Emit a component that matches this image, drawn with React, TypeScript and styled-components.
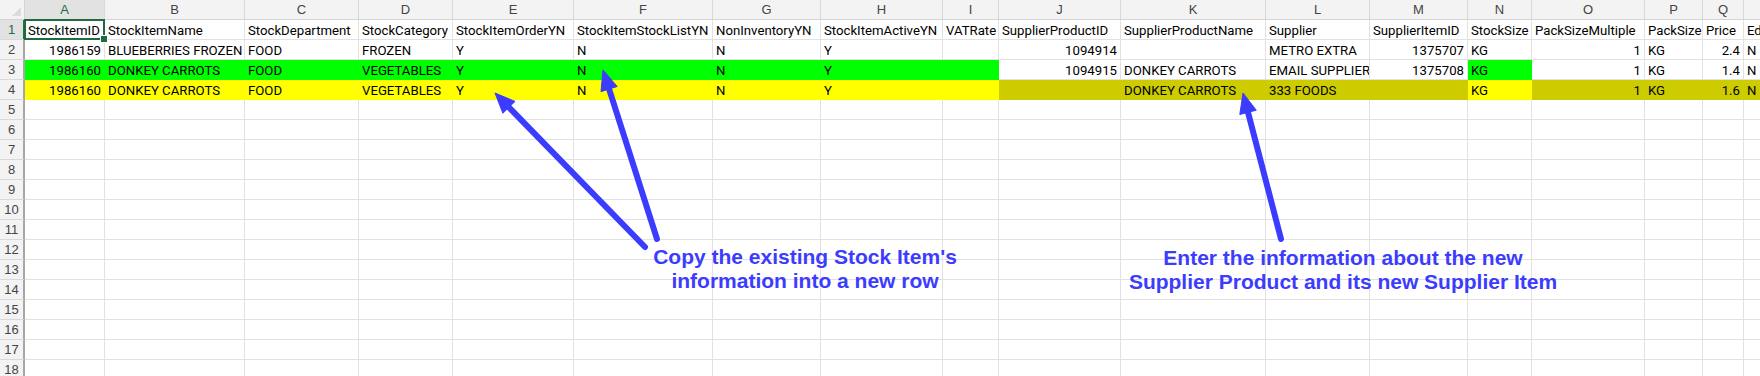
import React from 'react';
import styled, { createGlobalStyle, css } from 'styled-components';

const GlobalStyle = createGlobalStyle`
  html, body {
    margin: 0;
    padding: 0;
    background: #ffffff;
    overflow: hidden;
  }
`;

type Fill = 'green' | 'yellow' | 'olive' | undefined;

const fills: Record<string, string> = {
  green: '#00ff00',
  yellow: '#ffff00',
  olive: '#cccc00'
};

const columns = [
  { id: 'A', width: 80, num: true },
  { id: 'B', width: 140 },
  { id: 'C', width: 114 },
  { id: 'D', width: 94 },
  { id: 'E', width: 121 },
  { id: 'F', width: 139 },
  { id: 'G', width: 108 },
  { id: 'H', width: 122 },
  { id: 'I', width: 56 },
  { id: 'J', width: 122, num: true },
  { id: 'K', width: 145 },
  { id: 'L', width: 104 },
  { id: 'M', width: 98, num: true },
  { id: 'N', width: 64 },
  { id: 'O', width: 113, num: true },
  { id: 'P', width: 58 },
  { id: 'Q', width: 41, num: true },
  { id: 'R', width: 80 }
];

const headerRow = [
  'StockItemID', 'StockItemName', 'StockDepartment', 'StockCategory',
  'StockItemOrderYN', 'StockItemStockListYN', 'NonInventoryYN',
  'StockItemActiveYN', 'VATRate', 'SupplierProductID', 'SupplierProductName',
  'Supplier', 'SupplierItemID', 'StockSize', 'PackSizeMultiple', 'PackSize',
  'Price', 'Ed'
];

const dataRows: { values: string[]; fills: Fill[] }[] = [
  {
    values: ['1986159', 'BLUEBERRIES FROZEN', 'FOOD', 'FROZEN', 'Y', 'N', 'N', 'Y', '',
      '1094914', '', 'METRO EXTRA', '1375707', 'KG', '1', 'KG', '2.4', 'N'],
    fills: []
  },
  {
    values: ['1986160', 'DONKEY CARROTS', 'FOOD', 'VEGETABLES', 'Y', 'N', 'N', 'Y', '',
      '1094915', 'DONKEY CARROTS', 'EMAIL SUPPLIER', '1375708', 'KG', '1', 'KG', '1.4', 'N'],
    fills: [...Array(9).fill('green'), undefined, undefined, undefined, undefined, 'green']
  },
  {
    values: ['1986160', 'DONKEY CARROTS', 'FOOD', 'VEGETABLES', 'Y', 'N', 'N', 'Y', '',
      '', 'DONKEY CARROTS', '333 FOODS', '', 'KG', '1', 'KG', '1.6', 'N'],
    fills: [...Array(9).fill('yellow'), 'olive', 'olive', 'olive', 'olive', 'yellow',
      'olive', 'olive', 'olive', 'olive']
  }
];

const TOTAL_ROWS = 18;

const Page = styled.div`
  position: relative;
  width: 1760px;
  height: 376px;
  overflow: hidden;
  background: #ffffff;
`;

const Sheet = styled.div<{ $cols: string }>`
  display: grid;
  grid-template-columns: 25px ${p => p.$cols};
  grid-auto-rows: 20px;
  font-family: Roboto, "Liberation Sans", Arial, sans-serif;
  font-size: 13.2px;
  color: #000000;
`;

const Corner = styled.div`
  position: relative;
  background: #f3f3f3;
  border-right: 1px solid #d4d4d4;
  border-bottom: 1px solid #d4d4d4;
  box-sizing: border-box;
  &::after {
    content: '';
    position: absolute;
    right: 3px;
    bottom: 3px;
    border-style: solid;
    border-width: 0 0 9px 9px;
    border-color: transparent transparent #dcdcdc transparent;
  }
`;

const ColHeader = styled.div<{ $active?: boolean }>`
  background: ${p => (p.$active ? '#e2e2e2' : '#f3f3f3')};
  border-right: 1px solid #d9d9d9;
  border-bottom: 1px solid ${p => (p.$active ? '#217346' : '#d4d4d4')};
  box-sizing: border-box;
  text-align: center;
  line-height: 20px;
  font-family: "Liberation Sans", Arial, sans-serif;
  font-size: 13px;
  color: ${p => (p.$active ? '#1e6b41' : '#444444')};
`;

const RowHeader = styled.div<{ $active?: boolean }>`
  background: ${p => (p.$active ? '#e2e2e2' : '#f3f3f3')};
  border-right: 2px solid ${p => (p.$active ? '#217346' : '#a6a6a6')};
  border-bottom: 1px solid #d9d9d9;
  box-sizing: border-box;
  text-align: center;
  line-height: 20px;
  font-family: "Liberation Sans", Arial, sans-serif;
  font-size: 13px;
  color: ${p => (p.$active ? '#1e6b41' : '#444444')};
`;

const Cell = styled.div<{ $fill?: Fill; $num?: boolean; $selected?: boolean }>`
  position: relative;
  box-sizing: border-box;
  border-right: 1px solid #e1e1e1;
  border-bottom: 1px solid #e1e1e1;
  background: ${p => (p.$fill ? fills[p.$fill] : '#ffffff')};
  ${p => p.$fill && css`border-color: ${fills[p.$fill!]};`}
  padding: 1px 3px 0;
  line-height: 19px;
  white-space: nowrap;
  overflow: hidden;
  text-align: ${p => (p.$num ? 'right' : 'left')};
  ${p => p.$selected && css`
    overflow: visible;
    z-index: 2;
    &::before {
      content: '';
      position: absolute;
      left: -1px;
      top: -1px;
      right: -1px;
      bottom: -1px;
      border: 2px solid #1e6b41;
    }
    &::after {
      content: '';
      position: absolute;
      right: -4px;
      bottom: -4px;
      width: 6px;
      height: 6px;
      background: #1e6b41;
      border: 1px solid #ffffff;
    }
  `}
`;

const CellText = styled.span`
  position: relative;
`;

const Callout = styled.div<{ $x: number; $y: number }>`
  position: absolute;
  left: ${p => p.$x}px;
  top: ${p => p.$y}px;
  transform: translateX(-50%);
  font-family: "Liberation Sans", Arial, sans-serif;
  font-weight: 700;
  font-size: 21px;
  line-height: 24px;
  color: #3c3cff;
  text-align: center;
  white-space: nowrap;
`;

const Arrows = styled.svg`
  position: absolute;
  left: 0;
  top: 0;
  pointer-events: none;
`;

function Arrow({ tail, tip }: { tail: [number, number]; tip: [number, number] }) {
  const dx = tip[0] - tail[0];
  const dy = tip[1] - tail[1];
  const len = Math.hypot(dx, dy);
  const ux = dx / len;
  const uy = dy / len;
  const head = 20;
  const half = 8.5;
  const bx = tip[0] - ux * head;
  const by = tip[1] - uy * head;
  const px = -uy;
  const py = ux;
  const pts = [
    `${tip[0]},${tip[1]}`,
    `${bx + px * half},${by + py * half}`,
    `${bx - px * half},${by - py * half}`
  ].join(' ');
  return (
    <g fill="#3c3cff" stroke="#3c3cff">
      <line
        x1={tail[0]}
        y1={tail[1]}
        x2={bx + ux * 2}
        y2={by + uy * 2}
        strokeWidth={6}
        strokeLinecap="round"
      />
      <polygon points={pts} strokeWidth={1} strokeLinejoin="round" />
    </g>
  );
}

export default function App() {
  const colTemplate = columns.map(c => `${c.width}px`).join(' ');
  const rows: { values: string[]; fills: Fill[] }[] = [
    { values: headerRow, fills: [] },
    ...dataRows
  ];
  while (rows.length < TOTAL_ROWS) rows.push({ values: [], fills: [] });

  return (
    <Page>
      <GlobalStyle />
      <Sheet $cols={colTemplate}>
        <Corner />
        {columns.map(c => (
          <ColHeader key={c.id} $active={c.id === 'A'}>
            {c.id}
          </ColHeader>
        ))}
        {rows.map((row, r) => (
          <React.Fragment key={r}>
            <RowHeader $active={r === 0}>{r + 1}</RowHeader>
            {columns.map((c, i) => (
              <Cell
                key={c.id}
                $fill={row.fills[i]}
                $num={c.num && r > 0}
                $selected={r === 0 && i === 0}
              >
                <CellText>{row.values[i] ?? ''}</CellText>
              </Cell>
            ))}
          </React.Fragment>
        ))}
      </Sheet>

      <Arrows width={1760} height={376} viewBox="0 0 1760 376">
        <Arrow tail={[645, 247]} tip={[495, 93]} />
        <Arrow tail={[657, 239]} tip={[603, 70]} />
        <Arrow tail={[1281, 239]} tip={[1243, 93]} />
      </Arrows>

      <Callout $x={805} $y={245}>
        Copy the existing Stock Item's
        <br />
        information into a new row
      </Callout>
      <Callout $x={1343} $y={246}>
        Enter the information about the new
        <br />
        Supplier Product and its new Supplier Item
      </Callout>
    </Page>
  );
}
